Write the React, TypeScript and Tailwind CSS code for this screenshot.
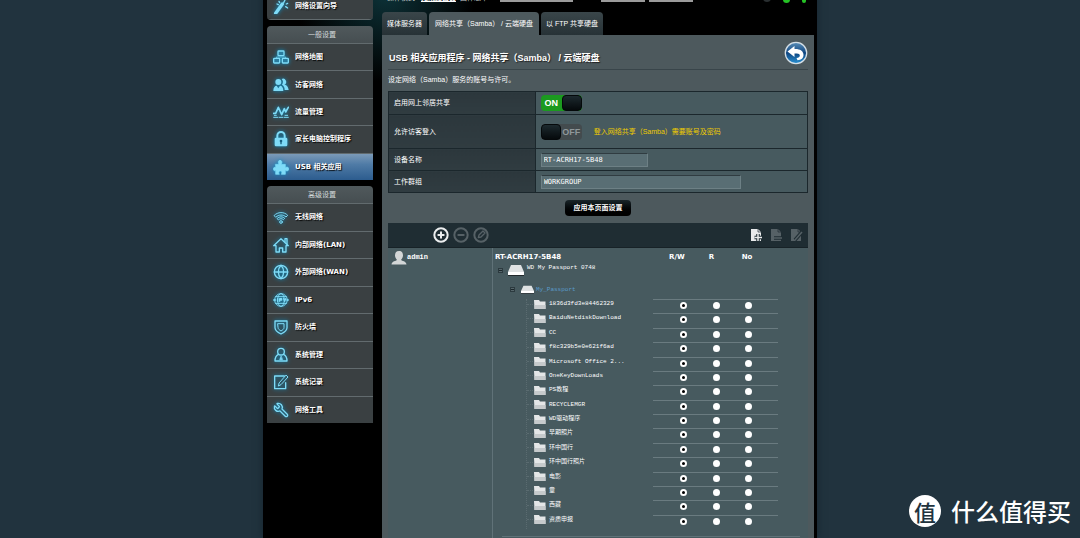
import { useState } from "react";
import type { ReactNode } from "react";
import { CircleMinus, CirclePlus, Globe, Wrench } from "lucide-react";

const Svg = ({ children, className = "size-4" }: { children: ReactNode; className?: string }) => (
	<svg
		viewBox="0 0 24 24"
		fill="none"
		stroke="currentColor"
		strokeWidth={2}
		strokeLinecap="round"
		strokeLinejoin="round"
		className={className}
		aria-hidden="true"
	>
		{children}
	</svg>
);

const WandIcon = () => (
	<Svg>
		<path d="M4 23 14 9" strokeWidth={5} />
		<path d="M16 7l2-4M20 9l2-1M19 13l3 2M9 5l1 2M6 9l2 1" />
	</Svg>
);

const MapIcon = () => (
	<Svg>
		<rect x="7.500" y="3" width="9" height="7" rx="1" fill="#2a7c9e" />
		<rect x="1" y="14" width="9" height="7" rx="1" fill="#2a7c9e" />
		<rect x="14" y="14" width="9" height="7" rx="1" fill="#2a7c9e" />
		<path d="M5 13v-1h14v1" strokeWidth={1} />
	</Svg>
);

const GuestIcon = () => (
	<Svg>
		<g fill="currentColor" stroke="none">
			<circle cx="8" cy="7.500" r="4.500" />
			<path d="M.5 21c0-5 2-8 5-8l2.500 4 2.500-4c3 0 5 3 5 8z" />
			<path d="M13 3a4.500 4.500 0 1 1 4 8.500c4 0 6 4 6.500 8h-6c0-4-1-6-4-8 2-3 2-6-.5-8.500z" />
		</g>
	</Svg>
);

const TrafficIcon = () => (
	<Svg>
		<path d="M1 14h3l4-9 5 11 4-9 2 5 4-7" strokeWidth={2.500} />
		<path d="M1 20h6M9 20h6M17 20h6M2 17h3M18 17h4" strokeWidth={1.500} />
	</Svg>
);

const LockIcon = () => (
	<Svg>
		<path d="M6.500 11V7a5.500 5.500 0 0 1 11 0v4" strokeWidth={3} />
		<rect x="2.500" y="10" width="19" height="13" rx="2" fill="currentColor" stroke="none" />
		<circle cx="12" cy="15" r="2" fill="#17607f" stroke="none" />
		<path d="M12 16v3" stroke="#17607f" />
	</Svg>
);

const PuzzleIcon = () => (
	<Svg>
		<path
			d="M4 8h5c-2-3-1-6 1.500-6s4 3 2 6h6v5c3-2 5-.5 5 2s-2 4-5 2v6h-6c2-3 0-5-1.500-5s-3.500 2-1.500 5H4v-6c-2 1.500-3.500 0-3.500-2S2 11.500 4 13z"
			fill="currentColor"
			strokeWidth={1}
		/>
	</Svg>
);

const WifiIcon = () => (
	<Svg>
		<path d="M2 9.500C7 4 17 4 22 9.500l-2.500 2.500c-4-4-11-4-15 0z" strokeWidth={1.500} />
		<path d="M6.500 14c3-3 8-3 11 0l-2 2c-2-2-5-2-7 0z" strokeWidth={1.500} />
		<circle cx="12" cy="19.500" r="2" strokeWidth={1.500} />
	</Svg>
);

const HouseIcon = () => (
	<Svg>
		<path d="M1 13 12 2.500 23 13h-3.500v9.500h-5v-6h-5v6h-5V13z" />
		<path d="M18 7V2.500h3v8" />
	</Svg>
);

const Ipv6Icon = () => (
	<Svg>
		<circle cx="12" cy="12" r="9.500" strokeWidth={1.500} />
		<ellipse cx="12" cy="12" rx="5" ry="9.500" strokeWidth={1.500} />
		<path d="M4 7h16M4 17h16" strokeWidth={1.500} />
		<path d="M1 12h3M7 10v4M10 14v-4h3v2h-3M16 10l1.500 4 1.500-4M21 12h2" />
	</Svg>
);

const ShieldIcon = () => (
	<Svg>
		<path d="M3 3h18v10c0 4-4 7-9 9.500C7 20 3 17 3 13z" />
		<path d="M7.500 7h9v6c0 2-2 3.500-4.500 5-2.500-1.500-4.500-3-4.500-5z" strokeWidth={1.500} />
	</Svg>
);

const AdminIcon = () => (
	<Svg>
		<circle cx="12" cy="7" r="5" />
		<path d="M8 11c-4 2-5 6-5 10h18c0-4-1-8-5-10" />
		<path d="M12 14l-2 5h4z" fill="currentColor" strokeWidth={1} />
	</Svg>
);

const LogIcon = () => (
	<Svg>
		<path d="M17 3H2.500v19H19v-9" />
		<path d="M20 2l2.500 2.500L12 16l-4 2 1-4z" strokeWidth={1.500} />
	</Svg>
);

const generalMenu = [
	{ label: "网络地图", icon: <MapIcon /> },
	{ label: "访客网络", icon: <GuestIcon /> },
	{ label: "流量管理", icon: <TrafficIcon /> },
	{ label: "家长电脑控制程序", icon: <LockIcon /> },
	{ label: "USB 相关应用", icon: <PuzzleIcon />, active: true },
];

const advancedMenu = [
	{ label: "无线网络", icon: <WifiIcon /> },
	{ label: "内部网络(LAN)", icon: <HouseIcon /> },
	{ label: "外部网络(WAN)", icon: <Globe className="size-4" /> },
	{ label: "IPv6", icon: <Ipv6Icon /> },
	{ label: "防火墙", icon: <ShieldIcon /> },
	{ label: "系统管理", icon: <AdminIcon /> },
	{ label: "系统记录", icon: <LogIcon /> },
	{ label: "网络工具", icon: <Wrench className="size-4 -scale-x-100" /> },
];

const folders = [
	"1836d3fd3e84462329",
	"BaiduNetdiskDownload",
	"CC",
	"f8c329b5e0e621f6ad",
	"Microsoft Office 2...",
	"OneKeyDownLoads",
	"PS教程",
	"RECYCLEMGR",
	"WD驱动程序",
	"早期照片",
	"环中国行",
	"环中国行照片",
	"电影",
	"童",
	"西藏",
	"资质申报",
];

const rights = ["R/W", "R", "No"];
const rightsCell = ["w-[47px] pl-[14px]", "w-8", "w-[46px] pr-[14px]"];

type MenuItemProps = { label: string; icon: ReactNode; active?: boolean };

const MenuItem = ({ label, icon, active }: MenuItemProps) => (
	<a
		href="#"
		className={`flex flex-1 items-center gap-1.5 border-b border-[#626b6e] pl-1.5 font-['DejaVu_Sans','Noto_Sans_CJK_SC',sans-serif] font-bold text-white [text-shadow:1px_1px_1px_#000] last:border-b-0 ${
			active
				? "bg-linear-to-b from-[#7b9ab8] via-[#4f7ba6] via-40% to-[#2c5c8e]"
				: "bg-[#3a4042]"
		}`}
	>
		<span className="shrink-0 text-[#7edbf7] drop-shadow-[0_0_2px_#0a8fc4]">{icon}</span>
		<span className="whitespace-nowrap">{label}</span>
	</a>
);

const MenuHeader = ({ children }: { children: ReactNode }) => (
	<h2 className="flex h-[18px] items-center justify-center rounded-t-sm border-b border-[#626b6e] bg-linear-to-b from-[#50595c] to-[#464e51] pl-1 text-[#d5dadc]">
		{children}
	</h2>
);

const Toggle = ({ label, initial }: { label: string; initial: boolean }) => {
	const [on, setOn] = useState(initial);
	return (
		<button
			role="switch"
			aria-checked={on}
			aria-label={label}
			onClick={() => setOn(!on)}
			className={`flex h-4 w-[41px] items-stretch overflow-hidden rounded-sm text-[9px] font-bold ${
				on ? "bg-[#1b9a1f] text-white" : "flex-row-reverse bg-[#434b4e] text-[#8f979a]"
			}`}
		>
			<span className="flex flex-1 items-center justify-center">{on ? "ON" : "OFF"}</span>
			<span className="w-5 rounded-sm border border-[#05090b] bg-linear-to-b from-[#1d2a2f] to-[#060a0c]" />
		</button>
	);
};

const SettingRow = ({ label, height, children }: { label: ReactNode; height: string; children: ReactNode }) => (
	<tr className={height}>
		<th className="w-[35%] border border-[#1b272c] bg-linear-to-b from-[#2c373c] to-[#303c41] px-[5px] py-0 text-left font-normal">
			{label}
		</th>
		<td className="border border-[#1b272c] bg-[#475a5f] px-[5px] py-0">{children}</td>
	</tr>
);

const DriveIcon = ({ className }: { className: string }) => (
	<svg viewBox="0 0 16 12" preserveAspectRatio="none" className={className} aria-hidden="true">
		<path d="M3 1h10l3 7H0z" fill="#dfe2e3" />
		<path d="M0 8h16v3H0z" fill="#fff" />
		<path d="M0 11h16v1H0z" fill="#22292c" />
	</svg>
);

const FolderIcon = () => (
	<svg viewBox="0 0 12 9" className="h-[9px] w-3 shrink-0" aria-hidden="true">
		<path d="M0 0h5l1 1.500h5.500V9H.5z" fill="#e4e6e7" />
		<path d="M.5 5h11v4H.5z" fill="#c6cacc" />
	</svg>
);

const TreeNode = () => (
	<span className="flex size-[5px] items-center justify-center border border-[#2c3a3f] bg-[#56666b]">
		<span className="h-px w-[3px] bg-[#1c272b]" />
	</span>
);

const DocIcon = ({ mark }: { mark: string }) => (
	<svg viewBox="0 0 14 14" className="size-3.5" aria-hidden="true">
		<path d="M2 1h7l3 3v9H2z" fill="currentColor" />
		<path d="M9 1v3h3" stroke="#1f2d33" strokeWidth=".7" fill="none" />
		<path d={mark} stroke="#1f2d33" strokeWidth="3.500" fill="none" />
		<path d={mark} stroke="currentColor" strokeWidth="1.500" fill="none" />
	</svg>
);

const UserIcon = () => (
	<svg viewBox="0 0 16 14" className="h-3.5 w-4" aria-hidden="true">
		<path
			d="M8 0c3 0 4 2 4 4.500C12 7 10.500 8 10 9c1 1 5 1 5.500 4.500H.5C1 10 5 10 6 9 5.500 8 4 7 4 4.500 4 2 5 0 8 0z"
			fill="#d3d6d7"
		/>
	</svg>
);

const BackIcon = () => (
	<svg viewBox="0 0 24 24" className="size-6" aria-hidden="true">
		<defs>
			<linearGradient id="back" x1="0" y1="0" x2="0" y2="1">
				<stop offset="0" stopColor="#5b8fb8" />
				<stop offset=".5" stopColor="#0f4580" />
				<stop offset="1" stopColor="#2a93d4" />
			</linearGradient>
		</defs>
		<circle cx="12" cy="12" r="10.700" fill="url(#back)" stroke="#d5dfe6" strokeWidth="1.300" />
		<path
			d="M3.500 10.500 10.500 5v3c5-.3 9 1.700 9 6 0 3-2.200 5-6 5.300l-1-2.300c2.500-.3 3.500-1.300 3.300-2.800-.3-1.400-2-1.700-5.300-1.700V16z"
			fill="#fff"
		/>
	</svg>
);

const Sidebar = () => (
	<nav className="flex w-[106px] shrink-0 flex-col gap-1.5">
		<div className="flex h-7 flex-col overflow-hidden rounded-b-sm border-b border-[#626b6e]">
			<MenuItem label="网络设置向导" icon={<WandIcon />} />
		</div>
		<section>
			<MenuHeader>一般设置</MenuHeader>
			<div className="flex h-[136px] flex-col">
				{generalMenu.map((item) => (
					<MenuItem key={item.label} {...item} />
				))}
			</div>
		</section>
		<section>
			<MenuHeader>高级设置</MenuHeader>
			<div className="flex h-[219px] flex-col">
				{advancedMenu.map((item) => (
					<MenuItem key={item.label} {...item} />
				))}
			</div>
		</section>
	</nav>
);

const StatusBar = () => (
	<header className="flex h-5 items-start pl-[5px] leading-[11px] text-[#c8ced0]">
		<span>操作模式:</span>
		<b className="ml-1 text-white underline">无线路由器</b>
		<span className="ml-1">固件版本:</span>
		<span className="ml-2.5 h-2.5 w-[73px] bg-[#9b9b9b]" />
		<span className="ml-7 h-2.5 w-11 bg-[#9b9b9b]" />
		<span className="ml-1 h-2.5 w-11 bg-[#9b9b9b]" />
		<span className="ml-auto h-2.5 w-2 rounded-b-sm bg-[#2a2f31]" />
		<span className="ml-3 h-[11px] w-[7px] rounded-b-sm bg-[#25c225]" />
		<span className="mr-2 ml-3 h-[11px] w-1 rounded-b-sm bg-[#25c225]" />
	</header>
);

const Tabs = () => (
	<div className="flex h-[23px] gap-0.5 whitespace-nowrap">
		<a href="#" className="flex items-center rounded-t-sm bg-linear-to-b from-[#3a464a] to-[#273236] px-[5px]">
			媒体服务器
		</a>
		<a href="#" className="flex items-center rounded-t-sm bg-[#4d595d] px-1.5">
			网络共享（Samba） / 云端硬盘
		</a>
		<a href="#" className="flex items-center rounded-t-sm bg-linear-to-b from-[#3a464a] to-[#273236] px-[5px]">
			以 FTP 共享硬盘
		</a>
	</div>
);

const FolderTable = () => {
	const [perms, setPerms] = useState<string[]>(folders.map(() => "R/W"));

	const handleChange = (i: number, right: string) => {
		setPerms(perms.map((p, n) => (n === i ? right : p)));
	};

	return (
		<div className="mr-[30px] ml-[33px] border-l border-dotted border-[#5a6b70]">
			<table className="h-[230px] w-full table-fixed border-collapse">
				<tbody>
					{folders.map((name, i) => (
						<tr key={name}>
							<td className="p-0 align-top">
								<div className="flex h-[9px] items-center">
									<span className="mr-px w-1.5 border-t border-dotted border-[#5a6b70]" />
									<FolderIcon />
									<span className="ml-[3px] leading-2 whitespace-nowrap">{name}</span>
								</div>
							</td>
							{rights.map((right, n) => (
								<td
									key={right}
									className={`border-t border-[#6a7b80] pt-0.5 pb-0 text-center align-top ${rightsCell[n]}`}
								>
									<input
										type="radio"
										name={`perm-${i}`}
										aria-label={`${name} ${right}`}
										checked={perms[i] === right}
										onChange={() => handleChange(i, right)}
										className="mx-auto block size-[7px] appearance-none rounded-full border-2 border-white bg-white checked:bg-black"
									/>
								</td>
							))}
						</tr>
					))}
				</tbody>
			</table>
		</div>
	);
};

const ShareBrowser = () => (
	<section className="flex flex-1 flex-col">
		<div className="flex h-[25px] items-center justify-between border-b border-[#172227] bg-[#1f2d33] pr-[5px] pl-[45px]">
			<div className="flex gap-1 text-[#566166]">
				<button aria-label="新增用户" className="text-[#eceeef]">
					<CirclePlus className="size-4" strokeWidth={3} />
				</button>
				<button aria-label="删除用户">
					<CircleMinus className="size-4" strokeWidth={3} />
				</button>
				<button aria-label="编辑用户">
					<Svg>
						<circle cx="12" cy="12" r="10" strokeWidth={3} />
						<path d="M8 16l1-4 6-6 3 3-6 6z" />
					</Svg>
				</button>
			</div>
			<div className="flex gap-1.5 text-[#566166]">
				<button aria-label="新增文件夹" className="text-[#e8eaeb]">
					<DocIcon mark="M9 6v7M5.500 9.500h7.500" />
				</button>
				<button aria-label="删除文件夹">
					<DocIcon mark="M5 10h8" />
				</button>
				<button aria-label="编辑文件夹">
					<DocIcon mark="M6 12l7-8" />
				</button>
			</div>
		</div>
		<div className="flex flex-1 bg-[#475a5f]">
			<div className="flex w-[105px] shrink-0 items-start border-r border-[#607278] pt-[3px] pl-[3px]">
				<UserIcon />
				<span className="font-['Liberation_Mono',monospace] leading-3 font-bold">admin</span>
			</div>
			<div className="min-w-0 flex-1 pt-1 font-['Liberation_Mono','Noto_Sans_CJK_SC',monospace] text-[6px]">
				<div className="flex h-2.5 items-center pr-11 pl-0.5 font-['DejaVu_Sans',sans-serif] text-[7px] font-bold">
					<span className="flex-1">RT-ACRH17-5B48</span>
					<span className="w-[30px]">R/W</span>
					<span className="w-[25px] text-center">R</span>
					<span className="ml-1.5 w-[34px] text-center">No</span>
				</div>
				<div className="flex h-4 items-center pl-[5px]">
					<TreeNode />
					<DriveIcon className="mr-[3px] ml-[5px] h-3 w-4" />
					<span className="pb-1">WD My Passport 0748</span>
				</div>
				<div className="flex h-[21px] items-center pt-0.5 pl-[17px]">
					<TreeNode />
					<DriveIcon className="mr-0.5 ml-1.5 h-[9px] w-[13px]" />
					<span className="text-[#5a9bcb]">My_Passport</span>
				</div>
				<FolderTable />
				<div className="mt-[7px] mr-2 ml-[9px] border-t border-[#607278] pb-px" />
			</div>
		</div>
	</section>
);

const Watermark = () => (
	<div className="absolute right-[9px] bottom-[11px] flex items-center gap-2.5 font-['Noto_Sans_CJK_SC',sans-serif] text-white">
		<span className="flex size-8 items-center justify-center rounded-full bg-white text-[22px] leading-8 font-medium text-[#21333e]">
			值
		</span>
		<span className="text-2xl leading-8 font-medium">什么值得买</span>
	</div>
);

const App = () => {
	return (
		<div className="relative min-h-screen overflow-hidden bg-[#21333e] font-['Liberation_Sans','Noto_Sans_CJK_SC',sans-serif] text-[7px] leading-2 text-white">
			<div className="mx-auto -mt-2 flex min-h-[calc(100vh+8px)] w-full max-w-[554px] gap-[9px] bg-black bg-[radial-gradient(circle_at_22%_0,#0d3339_0,#000_90px)] pr-[3px] pl-1 shadow-[0_0_8px_#14242e]">
				<Sidebar />
				<main className="flex min-w-0 flex-1 flex-col">
					<StatusBar />
					<Tabs />
					<div className="flex flex-1 flex-col bg-[#4d595d] px-1.5">
						<div className="flex items-end justify-between border-b border-[#39454a] pt-1.5 pb-1 pl-px">
							<h1 className="text-[9px] leading-3.5 font-bold [text-shadow:1px_1px_1px_#222]">
								USB 相关应用程序 - 网络共享（Samba） / 云端硬盘
							</h1>
							<button aria-label="返回">
								<BackIcon />
							</button>
						</div>
						<p className="pt-1.5 pb-[7px]">设定网络（Samba）服务的账号与许可。</p>
						<table className="w-full border-collapse">
							<tbody>
								<SettingRow label="启用网上邻居共享" height="h-[23px]">
									<Toggle label="启用网上邻居共享" initial={true} />
								</SettingRow>
								<SettingRow label="允许访客登入" height="h-[34px]">
									<div className="flex items-center gap-3">
										<Toggle label="允许访客登入" initial={false} />
										<span className="text-[#f0cc00]">登入网络共享（Samba）需要账号及密码</span>
									</div>
								</SettingRow>
								<SettingRow label={<label htmlFor="device">设备名称</label>} height="h-[22px]">
									<input
										id="device"
										defaultValue="RT-ACRH17-5B48"
										className="block h-3.5 w-[107px] border border-[#6d8085] border-t-[#303c41] bg-[#596e74] px-0.5 font-['DejaVu_Sans_Mono',monospace]"
									/>
								</SettingRow>
								<SettingRow label={<label htmlFor="workgroup">工作群组</label>} height="h-[22px]">
									<input
										id="workgroup"
										defaultValue="WORKGROUP"
										className="block h-3.5 w-[200px] border border-[#6d8085] border-t-[#303c41] bg-[#596e74] px-0.5 font-['DejaVu_Sans_Mono',monospace]"
									/>
								</SettingRow>
							</tbody>
						</table>
						<button className="mx-auto my-[7px] h-4 w-[66px] rounded-sm bg-linear-to-b from-[#1a2529] to-black font-bold">
							应用本页面设置
						</button>
						<ShareBrowser />
					</div>
				</main>
			</div>
			<Watermark />
		</div>
	);
};

export default App;
